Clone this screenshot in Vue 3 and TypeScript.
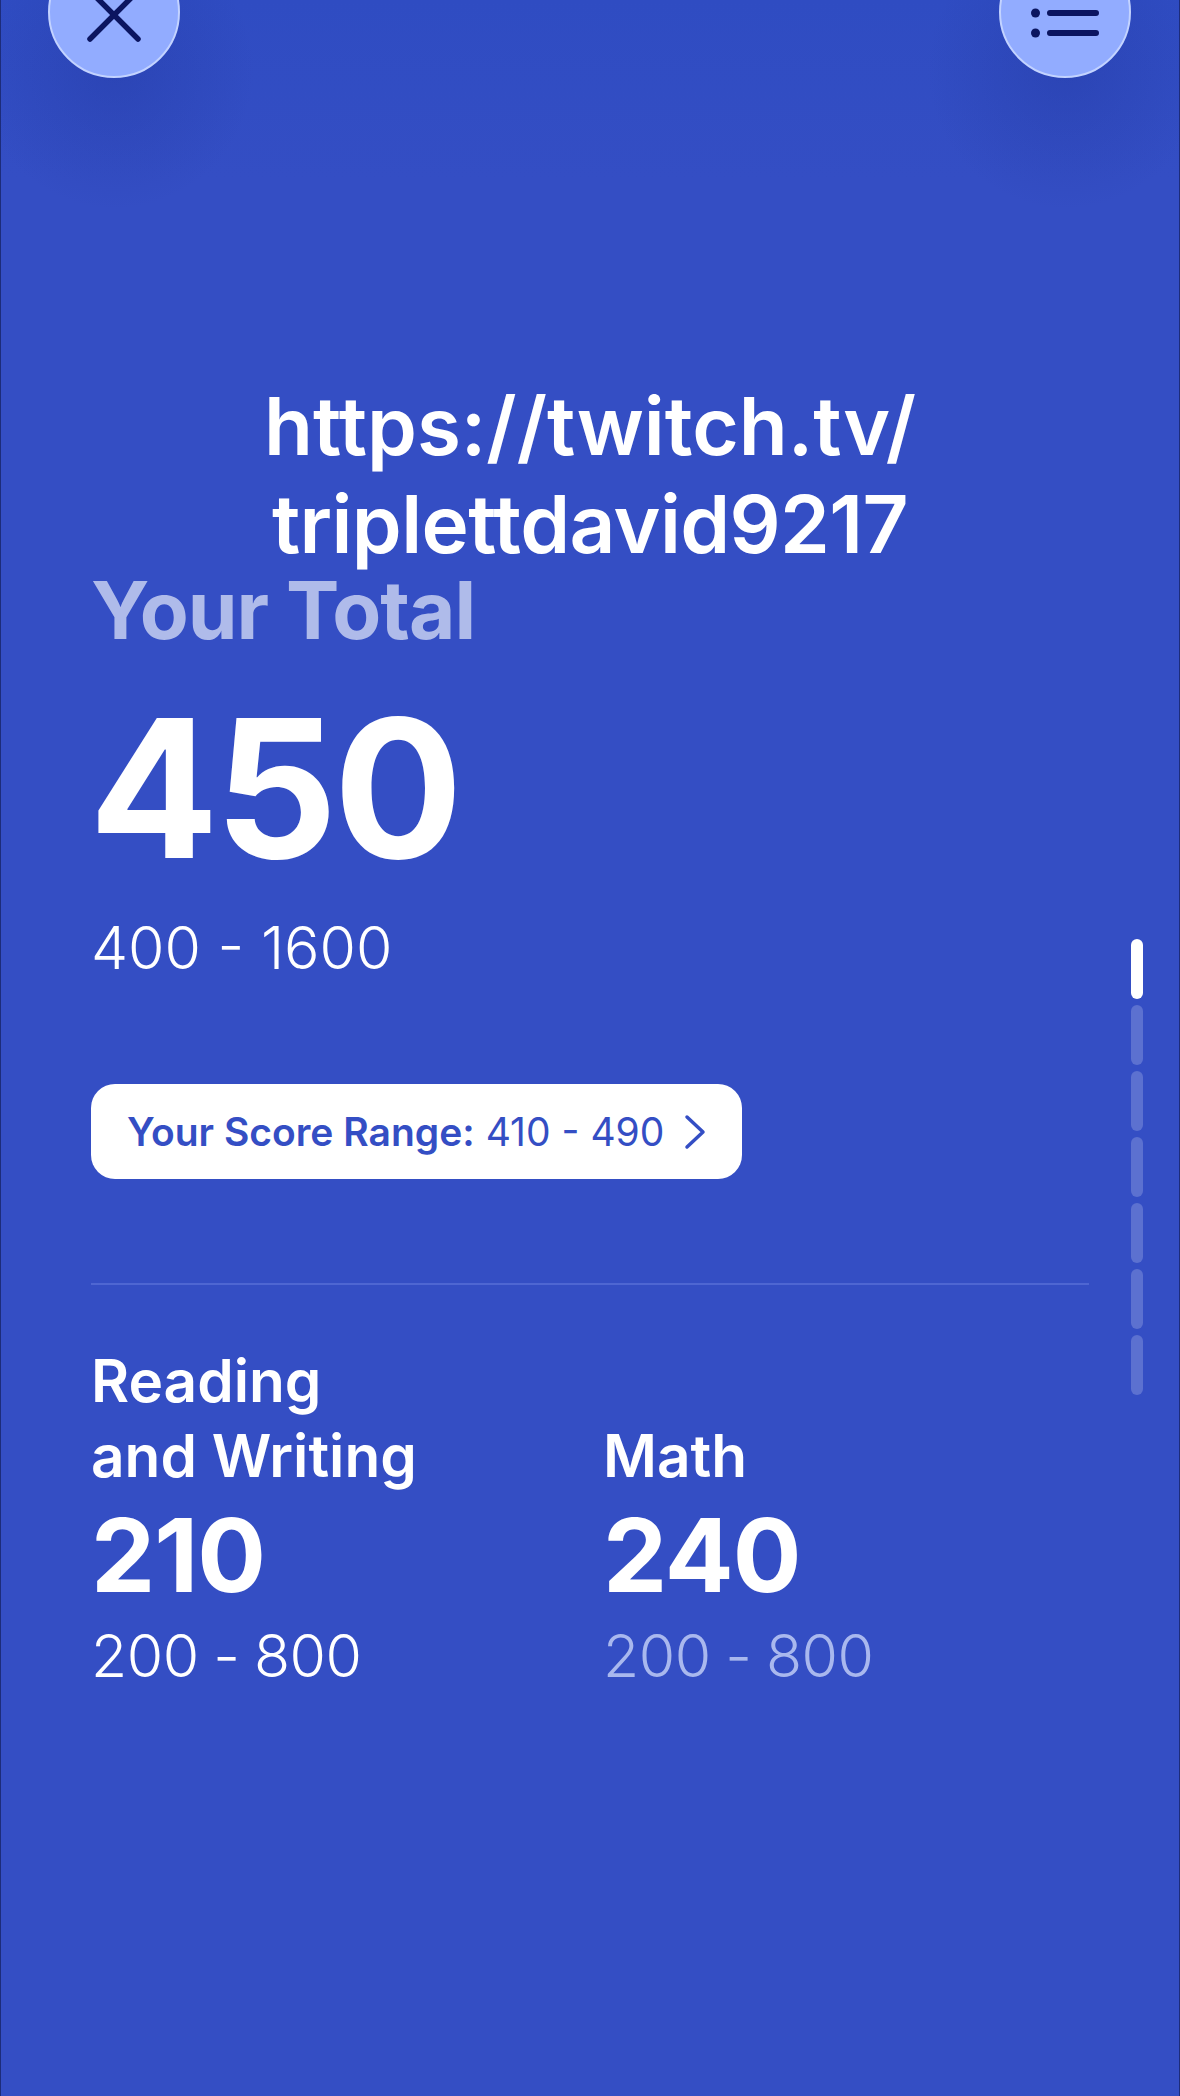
<script setup lang="ts">
const sections = [
  { name: 'Reading\nand Writing', score: 210, range: '200 - 800', dim: false },
  { name: 'Math', score: 240, range: '200 - 800', dim: true },
]

const pips = [true, false, false, false, false, false, false]
</script>

<template>
  <main class="page">
    <button class="round-btn close-btn" aria-label="Close">
      <svg width="56" height="56" viewBox="0 0 56 56">
        <path d="M4 4 L52 52 M52 4 L4 52" fill="none" stroke="#0b1560" stroke-width="5.5" stroke-linecap="round" />
      </svg>
    </button>
    <button class="round-btn list-btn" aria-label="Sections">
      <svg width="68" height="32" viewBox="0 0 68 32">
        <circle cx="4.5" cy="6" r="4.5" fill="#0b1560" />
        <circle cx="4.5" cy="26" r="4.5" fill="#0b1560" />
        <path d="M19 6 H65 M19 26 H65" fill="none" stroke="#0b1560" stroke-width="6" stroke-linecap="round" />
      </svg>
    </button>

    <h1 class="link-title">
      <span class="link-line first">https://twitch.tv/</span>
      <span class="link-line">triplettdavid9217</span>
    </h1>

    <section class="results">
      <h2 class="total-label">Your Total</h2>
      <div class="total-score">450</div>
      <div class="total-range">400 - 1600</div>

      <div class="range-card">
        <span class="range-text"><b>Your Score Range:</b> 410 - 490</span>
        <svg class="chevron" width="22" height="36" viewBox="0 0 22 36">
          <path d="M3 3 L19 18 L3 33" fill="none" stroke="#344ec4" stroke-width="3.5" stroke-linecap="round" stroke-linejoin="round" />
        </svg>
      </div>

      <hr class="divider" />

      <div class="sections">
        <div class="section" v-for="s in sections" :key="s.name">
          <div class="section-name">{{ s.name }}</div>
          <div class="section-score">{{ s.score }}</div>
          <div class="section-range" :class="{ dim: s.dim }">{{ s.range }}</div>
        </div>
      </div>
    </section>

    <div class="pips">
      <span class="pip" v-for="(on, i) in pips" :key="i" :class="{ on }"></span>
    </div>
  </main>
</template>

<style scoped>
.page {
  position: relative;
  box-sizing: border-box;
  width: 1180px;
  height: 2096px;
  overflow: hidden;
  padding-top: 377px;
  background:
    radial-gradient(circle at 114px 70px, rgba(30, 50, 150, 0.3), rgba(30, 50, 150, 0) 140px),
    radial-gradient(circle at 1065px 70px, rgba(30, 50, 150, 0.3), rgba(30, 50, 150, 0) 140px),
    linear-gradient(#2f4cc2, #344ec4 180px);
  border-left: 1px solid #1d2c7a;
  border-right: 1px solid #1d2c7a;
  font-family: Inter, "Liberation Sans", sans-serif;
  color: #fff;
}

.round-btn {
  position: absolute;
  top: -54px;
  width: 132px;
  height: 132px;
  padding: 0;
  display: flex;
  align-items: center;
  justify-content: center;
  border: 2px solid #c3d3ff;
  border-radius: 50%;
  background: #92acff;
}

.close-btn {
  left: 47px;
}

.close-btn svg {
  margin-top: 6px;
}

.list-btn {
  left: 998px;
}

.list-btn svg {
  margin-top: 22px;
}

.link-title {
  margin: 0;
  text-align: center;
  font-size: 80px;
  font-weight: 600;
  line-height: 98px;
  letter-spacing: -0.6px;
  font-feature-settings: "calt" 0;
}

.link-line {
  display: block;
}

.link-line.first {
  letter-spacing: 0;
}

.results {
  padding: 0 90px;
}

.total-label {
  margin: -5px 0 0;
  font-size: 80px;
  font-weight: 700;
  line-height: 84px;
  letter-spacing: -1px;
  color: #afbbea;
}

.total-score {
  margin: 36px 0 0 -2px;
  font-size: 192px;
  font-weight: 700;
  line-height: 200px;
  letter-spacing: -4px;
}

.total-range {
  margin-top: 24px;
  font-size: 59px;
  font-weight: 300;
  line-height: 72px;
}

.range-card {
  box-sizing: border-box;
  width: 651px;
  height: 95px;
  margin-top: 100px;
  padding: 0 36px;
  display: flex;
  align-items: center;
  justify-content: space-between;
  border-radius: 24px;
  background: #fff;
  color: #344ec4;
  font-size: 39px;
}

.range-text b {
  font-weight: 600;
}

.divider {
  margin: 104px 0 0;
  border: 0;
  height: 2px;
  background: #4e66d2;
}

.sections {
  margin-top: 58px;
  display: grid;
  grid-template-columns: 512px 1fr;
  align-items: end;
}

.section-name {
  font-size: 58.5px;
  font-weight: 600;
  line-height: 75px;
  white-space: pre-line;
}

.section-score {
  margin-top: 7px;
  font-size: 102px;
  font-weight: 700;
  line-height: 110px;
  letter-spacing: -1px;
}

.section-range {
  margin-top: 10px;
  font-size: 59px;
  font-weight: 300;
  line-height: 72px;
  letter-spacing: -0.5px;
  word-spacing: -1.5px;
}

.section-range.dim {
  color: #a9b8ee;
}

.pips {
  position: absolute;
  left: 1130px;
  top: 939px;
  display: flex;
  flex-direction: column;
  gap: 6px;
}

.pip {
  width: 12px;
  height: 60px;
  border-radius: 6px;
  background: #5c71d0;
}

.pip.on {
  background: #fff;
}
</style>

<style>
html,
body {
  margin: 0;
  background: #344ec4;
}
</style>
